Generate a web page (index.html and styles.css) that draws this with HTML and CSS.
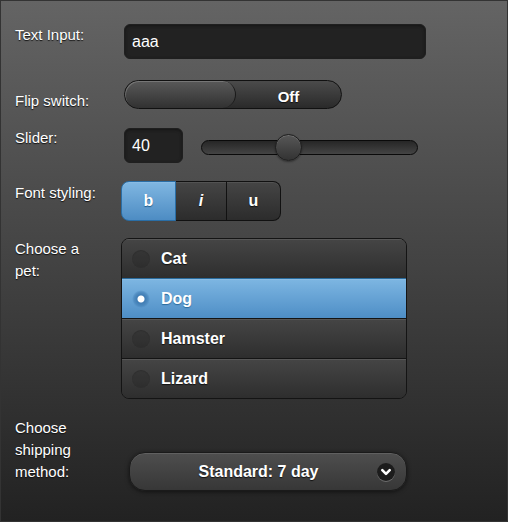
FILE: index.html
```html
<!DOCTYPE html>
<html>
<head>
<meta charset="utf-8">
<link rel="stylesheet" href="styles.css">
</head>
<body>
<div class="page">
  <div class="row row-text">
    <div class="lbl lbl-text">Text Input:</div>
    <div class="field txt">aaa</div>
  </div>
  <div class="row row-flip">
    <div class="lbl lbl-flip">Flip switch:</div>
    <div class="flip">
      <div class="flip-handle"></div>
      <div class="flip-label">Off</div>
    </div>
  </div>
  <div class="row row-slider">
    <div class="lbl lbl-slider">Slider:</div>
    <div class="field num">40</div>
    <div class="track">
      <div class="knob" style="left:40%"></div>
    </div>
  </div>
  <div class="row row-font">
    <div class="lbl lbl-font">Font styling:</div>
    <div class="cg">
      <div class="cg-btn cg-b active">b</div>
      <div class="cg-btn cg-i"><i>i</i></div>
      <div class="cg-btn cg-u">u</div>
    </div>
  </div>
  <div class="row row-pet">
    <div class="lbl">Choose a pet:</div>
    <div class="rg">
      <div class="opt"><span class="dot"></span>Cat</div>
      <div class="opt checked"><span class="dot"></span>Dog</div>
      <div class="opt"><span class="dot"></span>Hamster</div>
      <div class="opt"><span class="dot"></span>Lizard</div>
    </div>
  </div>
  <div class="row row-ship">
    <div class="lbl">Choose shipping method:</div>
    <div class="sel">
      <span class="sel-text">Standard: 7 day</span>
      <svg class="sel-icon" width="18" height="18" viewBox="0 0 18 18">
        <circle cx="9" cy="9" r="9" fill="#1c1c1c"/>
        <path d="M5.3 7.2 L9 10.9 L12.7 7.2" fill="none" stroke="#fff" stroke-width="2.6" stroke-linecap="round" stroke-linejoin="round"/>
      </svg>
    </div>
  </div>
</div>
</body>
</html>
```
FILE: styles.css
```css
html, body {
  margin: 0;
  padding: 0;
}
body {
  font-family: "Liberation Sans", Arial, sans-serif;
  color: #fff;
}
.page {
  width: 508px;
  height: 522px;
  box-sizing: border-box;
  border: 1px solid #333;
  background: linear-gradient(#646464, #222);
  padding: 23px 0 0 14px;
}
.row {
  display: flex;
  align-items: flex-start;
}
.lbl {
  flex: none;
  width: 86px;
  margin-right: 23px;
  font-size: 15px;
  line-height: 22px;
  text-shadow: 0 1px 1px #111;
}
.lbl-text { margin-top: 0; }
.lbl-flip { margin-top: 10px; }
.lbl-slider { margin-top: -1px; }
.lbl-font { margin-top: 1px; }

.row-flip { margin-top: 21px; }
.row-slider { margin-top: 16px; }
.row-font { margin-top: 18px; }
.row-pet { margin-top: 17px; }
.row-ship { margin-top: 18px; }

.field {
  height: 35px;
  box-sizing: border-box;
  background: #222;
  border: 1px solid #1f1f1f;
  border-radius: 6px;
  padding: 0 7px;
  font-size: 16px;
  display: flex;
  align-items: center;
  box-shadow: inset 0 1px 3px #151515;
}
.txt { width: 302px; }
.num { width: 59px; flex: none; }

.flip {
  width: 218px;
  height: 29px;
  box-sizing: border-box;
  border: 1px solid #111;
  border-radius: 15px;
  background: linear-gradient(#4b4b4b, #2a2a2a);
  display: flex;
  overflow: hidden;
}
.flip-handle {
  width: 111px;
  height: 27px;
  box-sizing: border-box;
  border-radius: 14px;
  border-right: 1px solid #1a1a1a;
  background: linear-gradient(#595959, #313131);
  box-shadow: inset 1px 1px 0 rgba(255, 255, 255, 0.18);
}
.flip-label {
  flex: 1;
  text-align: center;
  font-weight: bold;
  font-size: 15px;
  line-height: 23px;
  padding-top: 4px;
  text-shadow: 0 1px 1px #111;
}

.track {
  position: relative;
  width: 217px;
  height: 15px;
  box-sizing: border-box;
  margin: 12px 0 0 18px;
  border: 1px solid #0a0a0a;
  border-radius: 8px;
  background: linear-gradient(#262626, #444);
}
.knob {
  position: absolute;
  top: -7px;
  width: 27px;
  height: 27px;
  margin-left: -13px;
  box-sizing: border-box;
  border-radius: 50%;
  border: 1px solid #1e1e1e;
  background: linear-gradient(#575757, #333);
  box-shadow: inset 0 1px 0 rgba(255, 255, 255, 0.15), 0 1px 2px rgba(0, 0, 0, 0.4);
}

.cg {
  display: flex;
  margin-left: -3px;
}
.cg-btn {
  height: 40px;
  box-sizing: border-box;
  border: 1px solid #111;
  border-left-width: 0;
  background: linear-gradient(#454545, #2c2c2c);
  box-shadow: inset 0 1px 0 rgba(255, 255, 255, 0.08);
  font-weight: bold;
  font-size: 16px;
  display: flex;
  align-items: center;
  justify-content: center;
  text-shadow: 0 1px 1px #111;
}
.cg-b {
  width: 55px;
  border-left-width: 1px;
  border-radius: 8px 0 0 8px;
}
.cg-i { width: 51px; }
.cg-u {
  width: 54px;
  border-radius: 0 8px 8px 0;
}
.cg-btn.active {
  background: linear-gradient(#80b7e2, #4d8cc3);
  border-color: #2a6ea6;
  text-shadow: 0 1px 1px #1d5a8a;
}

.rg {
  margin-left: -3px;
  width: 286px;
  box-sizing: border-box;
  border: 1px solid #141414;
  border-radius: 8px;
  overflow: hidden;
}
.opt {
  height: 40px;
  box-sizing: border-box;
  border-top: 1px solid #141414;
  background: linear-gradient(#454545, #2e2e2e);
  box-shadow: inset 0 1px 0 rgba(255, 255, 255, 0.1);
  display: flex;
  align-items: center;
  font-weight: bold;
  font-size: 16px;
  text-shadow: 0 1px 1px #111;
}
.opt:first-child {
  height: 39px;
  border-top: 0;
}
.opt.checked {
  background: linear-gradient(#7db6e2, #4e8ec6);
  border-top-color: #2a6b9c;
  text-shadow: 0 1px 1px #2a6b9c;
}
.dot {
  width: 18px;
  height: 18px;
  border-radius: 50%;
  margin: 0 11px 0 10px;
  background: rgba(0, 0, 0, 0.12);
  box-shadow: inset 0 1px 1px rgba(0, 0, 0, 0.15);
}
.checked .dot {
  background: radial-gradient(circle, #fff 0 3px, #3f7cb3 4px, rgba(63, 124, 179, 0.55) 7px, rgba(63, 124, 179, 0) 9px);
  box-shadow: none;
}

.sel {
  margin: 35px 0 0 5px;
  width: 278px;
  height: 39px;
  box-sizing: border-box;
  border: 1px solid #1a1a1a;
  border-radius: 16px;
  background: linear-gradient(#4e4e4e, #373737);
  box-shadow: 0 1px 4px rgba(0, 0, 0, 0.55), inset 0 1px 0 rgba(255, 255, 255, 0.1);
  display: flex;
  align-items: center;
  padding: 0 11px 0 15px;
}
.sel-text {
  flex: 1;
  text-align: center;
  font-weight: bold;
  font-size: 16px;
  text-shadow: 0 1px 1px #111;
  margin-right: 5px;
}
.sel-icon {
  flex: none;
  display: block;
  filter: drop-shadow(0 1px 0 rgba(255, 255, 255, 0.25));
}
```
